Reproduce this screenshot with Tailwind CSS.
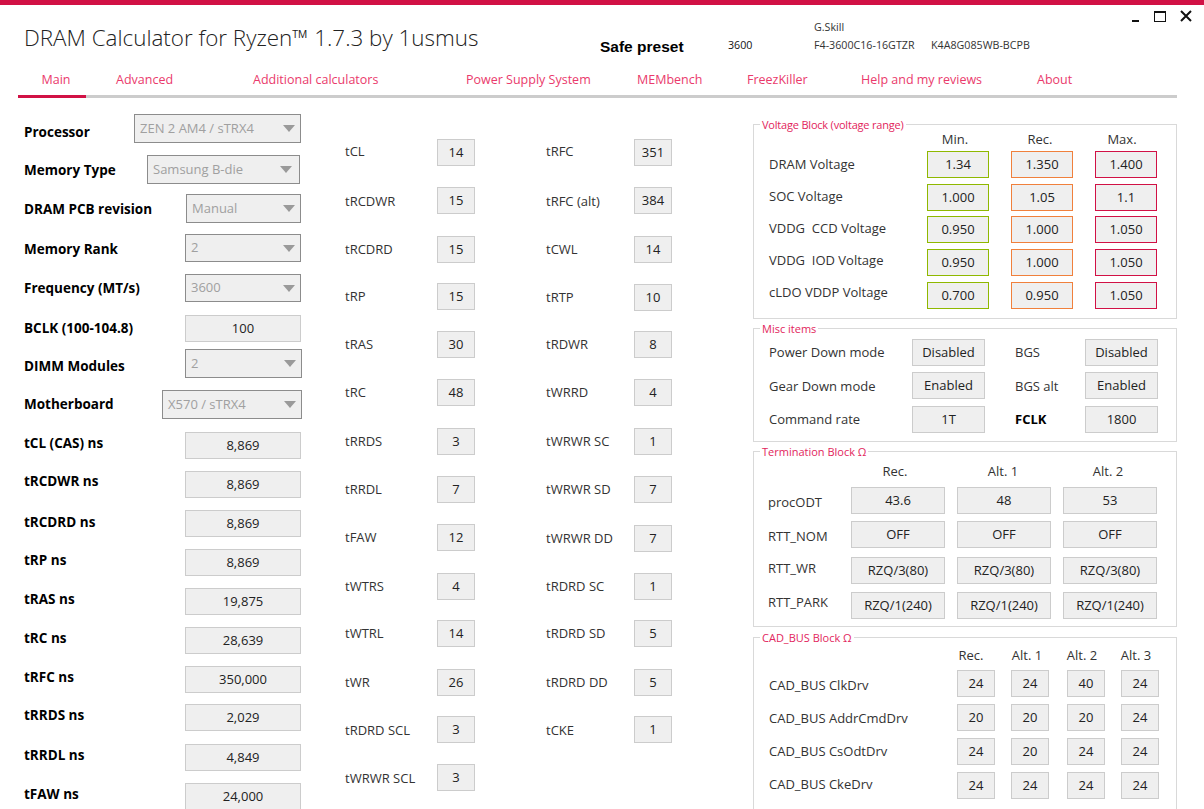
<!DOCTYPE html>
<html lang="en">

<head>
    <meta charset="UTF-8">
    <title>DRAM Calculator for Ryzen</title>
    <script src="https://cdn.jsdelivr.net/npm/@tailwindcss/browser@4"></script>
</head>

<body class="bg-white h-[809px] overflow-hidden font-['Open_Sans',sans-serif] text-[13px] text-[#333]">
    <div class="h-[5px] bg-[#d11145]"></div>

    <!-- header -->
    <header class="flex h-[56px] relative">
        <h1 class="ml-[24px] mt-[15px] text-[22.4px] leading-[36px] font-light text-[#222] w-[576px] whitespace-nowrap">DRAM Calculator for Ryzen™ 1.7.3 by 1usmus</h1>
        <div class="mt-[32px] w-[128px] font-['Liberation_Sans',sans-serif] font-bold text-[15.5px] leading-[20px] text-black">Safe preset</div>
        <div class="mt-[33px] w-[86px] text-[10.7px] leading-[14px] text-[#111]">3600</div>
        <div class="text-[10.7px] leading-[14px] text-[#333]">
            <div class="mt-[15px]">G.Skill</div>
            <div class="mt-[4px] flex"><span class="w-[117px]">F4-3600C16-16GTZR</span><span>K4A8G085WB-BCPB</span></div>
        </div>
        <svg class="absolute left-[1126px] top-[2px]" width="72" height="20" viewBox="0 0 72 20">
            <rect x="6" y="13" width="7" height="2" fill="#111" />
            <rect x="28.5" y="4.5" width="11" height="10" fill="none" stroke="#111" stroke-width="1" />
            <rect x="28" y="4" width="12" height="2" fill="#111" />
            <path d="M55 4 L65 14 M65 4 L55 14" stroke="#111" stroke-width="2" fill="none" />
        </svg>
    </header>

    <!-- tabs -->
    <nav class="ml-[18px] w-[1159px] h-[37px] border-b-[3px] border-[#cccccc] flex text-[#ea3a6c] text-[12.5px] leading-[38px]">
        <div class="w-[68px] h-[37px] border-b-[3px] border-[#d11145] text-center pl-[8px]">Main</div>
        <div class="w-[167px] pl-[30px]">Advanced</div>
        <div class="w-[213px]">Additional calculators</div>
        <div class="w-[171px]">Power Supply System</div>
        <div class="w-[110px]">MEMbench</div>
        <div class="w-[114px]">FreezKiller</div>
        <div class="w-[176px]">Help and my reviews</div>
        <div>About</div>
    </nav>

    <main class="flex items-start mt-[16px]">
        <!-- left column -->
        <section class="ml-[24px] w-[278px] font-bold text-[13.5px] text-black">
            <div class="h-[29px] flex items-center justify-between"><span class="pt-[7px]">Processor</span>
                <div class="mr-[1px] w-[167px] h-full bg-[#efefef] border border-[#8c8c8c] pl-[5px] pr-[5px] flex items-center justify-between font-normal text-[13px] text-[#a0a0a0]"><span>ZEN 2 AM4 / sTRX4</span><svg width="12" height="7"><path d="M0 0 H12 L6 7 Z" fill="#9a9a9a" /></svg></div></div>
            <div class="mt-[12px] h-[29px] flex items-center justify-between"><span class="pt-[1px]">Memory Type</span>
                <div class="mr-[2px] w-[153px] h-full bg-[#efefef] border border-[#8c8c8c] pl-[5px] pr-[7px] flex items-center justify-between font-normal text-[13px] text-[#a0a0a0]"><span>Samsung B-die</span><svg width="12" height="7"><path d="M0 0 H12 L6 7 Z" fill="#9a9a9a" /></svg></div></div>
            <div class="mt-[10px] h-[29px] flex items-center justify-between"><span class="pt-[1px]">DRAM PCB revision</span>
                <div class="mr-[1px] w-[115px] h-full bg-[#efefef] border border-[#8c8c8c] pl-[5px] pr-[5px] flex items-center justify-between font-normal text-[13px] text-[#a0a0a0]"><span>Manual</span><svg width="12" height="7"><path d="M0 0 H12 L6 7 Z" fill="#9a9a9a" /></svg></div></div>
            <div class="mt-[11px] h-[28px] flex items-center justify-between"><span class="pt-[2px]">Memory Rank</span>
                <div class="mr-[1px] w-[116px] h-full bg-[#efefef] border border-[#8c8c8c] pl-[5px] pr-[5px] flex items-center justify-between font-normal text-[13px] text-[#a0a0a0]"><span>2</span><svg width="12" height="7"><path d="M0 0 H12 L6 7 Z" fill="#9a9a9a" /></svg></div></div>
            <div class="mt-[12px] h-[28px] flex items-center justify-between"><span>Frequency (MT/s)</span>
                <div class="mr-[1px] w-[116px] h-full bg-[#efefef] border border-[#8c8c8c] pl-[5px] pr-[5px] flex items-center justify-between font-normal text-[13px] text-[#a0a0a0]"><span>3600</span><svg width="12" height="7"><path d="M0 0 H12 L6 7 Z" fill="#9a9a9a" /></svg></div></div>
            <div class="mt-[13px] h-[27px] flex items-center justify-between"><span>BCLK (100-104.8)</span>
                <div class="mr-[1px] w-[116px] h-full bg-[#efefef] border border-[#cccccc] flex items-center justify-center font-normal text-[13px] text-[#222]">100</div></div>
            <div class="mt-[7px] h-[29px] flex items-center justify-between"><span class="pt-[5px]">DIMM Modules</span>
                <div class="w-[117px] h-full bg-[#efefef] border border-[#8c8c8c] pl-[5px] pr-[5px] flex items-center justify-between font-normal text-[13px] text-[#a0a0a0]"><span>2</span><svg width="12" height="7"><path d="M0 0 H12 L6 7 Z" fill="#9a9a9a" /></svg></div></div>
            <div class="mt-[12px] h-[29px] flex items-center justify-between"><span>Motherboard</span>
                <div class="w-[140px] h-full bg-[#efefef] border border-[#8c8c8c] pl-[5px] pr-[5px] flex items-center justify-between font-normal text-[13px] text-[#a0a0a0]"><span>X570 / sTRX4</span><svg width="12" height="7"><path d="M0 0 H12 L6 7 Z" fill="#9a9a9a" /></svg></div></div>
            <div class="mt-[13px] h-[27px] flex items-center justify-between"><span class="pb-[4px]">tCL (CAS) ns</span>
                <div class="mr-[1px] w-[116px] h-full bg-[#efefef] border border-[#cccccc] flex items-center justify-center font-normal text-[13px] text-[#222]">8,869</div></div>
            <div class="mt-[12px] h-[27px] flex items-center justify-between"><span class="pb-[6px]">tRCDWR ns</span>
                <div class="mr-[1px] w-[116px] h-full bg-[#efefef] border border-[#cccccc] flex items-center justify-center font-normal text-[13px] text-[#222]">8,869</div></div>
            <div class="mt-[12px] h-[27px] flex items-center justify-between"><span class="pb-[2px]">tRCDRD ns</span>
                <div class="mr-[1px] w-[116px] h-full bg-[#efefef] border border-[#cccccc] flex items-center justify-center font-normal text-[13px] text-[#222]">8,869</div></div>
            <div class="mt-[12px] h-[27px] flex items-center justify-between"><span class="pb-[4px]">tRP ns</span>
                <div class="mr-[1px] w-[116px] h-full bg-[#efefef] border border-[#cccccc] flex items-center justify-center font-normal text-[13px] text-[#222]">8,869</div></div>
            <div class="mt-[12px] h-[27px] flex items-center justify-between"><span class="pb-[4px]">tRAS ns</span>
                <div class="mr-[1px] w-[116px] h-full bg-[#efefef] border border-[#cccccc] flex items-center justify-center font-normal text-[13px] text-[#222]">19,875</div></div>
            <div class="mt-[12px] h-[27px] flex items-center justify-between"><span class="pb-[4px]">tRC ns</span>
                <div class="mr-[1px] w-[116px] h-full bg-[#efefef] border border-[#cccccc] flex items-center justify-center font-normal text-[13px] text-[#222]">28,639</div></div>
            <div class="mt-[12px] h-[27px] flex items-center justify-between"><span class="pb-[4px]">tRFC ns</span>
                <div class="mr-[1px] w-[116px] h-full bg-[#efefef] border border-[#cccccc] flex items-center justify-center font-normal text-[13px] text-[#222]">350,000</div></div>
            <div class="mt-[11px] h-[27px] flex items-center justify-between"><span class="pb-[4px]">tRRDS ns</span>
                <div class="mr-[1px] w-[116px] h-full bg-[#efefef] border border-[#cccccc] flex items-center justify-center font-normal text-[13px] text-[#222]">2,029</div></div>
            <div class="mt-[13px] h-[27px] flex items-center justify-between"><span class="pb-[4px]">tRRDL ns</span>
                <div class="mr-[1px] w-[116px] h-full bg-[#efefef] border border-[#cccccc] flex items-center justify-center font-normal text-[13px] text-[#222]">4,849</div></div>
            <div class="mt-[12px] h-[27px] flex items-center justify-between"><span class="pb-[4px]">tFAW ns</span>
                <div class="mr-[1px] w-[116px] h-full bg-[#efefef] border border-[#cccccc] flex items-center justify-center font-normal text-[13px] text-[#222]">24,000</div></div>
        </section>

        <!-- timings 1 -->
        <section class="ml-[43px] w-[130px] mt-[25px]">
            <div class="h-[27px] flex items-center justify-between"><span class="pb-[2px]">tCL</span><div class="w-[38px] h-full bg-[#efefef] border border-[#cccccc] flex items-center justify-center text-[#222]">14</div></div>
            <div class="mt-[21px] h-[27px] flex items-center justify-between"><span class="pt-[3px]">tRCDWR</span><div class="w-[38px] h-full bg-[#efefef] border border-[#cccccc] flex items-center justify-center text-[#222]">15</div></div>
            <div class="mt-[22px] h-[27px] flex items-center justify-between"><span>tRCDRD</span><div class="w-[38px] h-full bg-[#efefef] border border-[#cccccc] flex items-center justify-center text-[#222]">15</div></div>
            <div class="mt-[20px] h-[27px] flex items-center justify-between"><span>tRP</span><div class="w-[38px] h-full bg-[#efefef] border border-[#cccccc] flex items-center justify-center text-[#222]">15</div></div>
            <div class="mt-[21px] h-[27px] flex items-center justify-between"><span>tRAS</span><div class="w-[38px] h-full bg-[#efefef] border border-[#cccccc] flex items-center justify-center text-[#222]">30</div></div>
            <div class="mt-[21px] h-[27px] flex items-center justify-between"><span>tRC</span><div class="w-[38px] h-full bg-[#efefef] border border-[#cccccc] flex items-center justify-center text-[#222]">48</div></div>
            <div class="mt-[22px] h-[27px] flex items-center justify-between"><span>tRRDS</span><div class="w-[38px] h-full bg-[#efefef] border border-[#cccccc] flex items-center justify-center text-[#222]">3</div></div>
            <div class="mt-[21px] h-[27px] flex items-center justify-between"><span>tRRDL</span><div class="w-[38px] h-full bg-[#efefef] border border-[#cccccc] flex items-center justify-center text-[#222]">7</div></div>
            <div class="mt-[21px] h-[27px] flex items-center justify-between"><span>tFAW</span><div class="w-[38px] h-full bg-[#efefef] border border-[#cccccc] flex items-center justify-center text-[#222]">12</div></div>
            <div class="mt-[22px] h-[27px] flex items-center justify-between"><span>tWTRS</span><div class="w-[38px] h-full bg-[#efefef] border border-[#cccccc] flex items-center justify-center text-[#222]">4</div></div>
            <div class="mt-[20px] h-[27px] flex items-center justify-between"><span>tWTRL</span><div class="w-[38px] h-full bg-[#efefef] border border-[#cccccc] flex items-center justify-center text-[#222]">14</div></div>
            <div class="mt-[22px] h-[27px] flex items-center justify-between"><span>tWR</span><div class="w-[38px] h-full bg-[#efefef] border border-[#cccccc] flex items-center justify-center text-[#222]">26</div></div>
            <div class="mt-[20px] h-[27px] flex items-center justify-between"><span class="pt-[2px]">tRDRD SCL</span><div class="w-[38px] h-full bg-[#efefef] border border-[#cccccc] flex items-center justify-center text-[#222]">3</div></div>
            <div class="mt-[21px] h-[27px] flex items-center justify-between"><span class="pt-[2px]">tWRWR SCL</span><div class="w-[38px] h-full bg-[#efefef] border border-[#cccccc] flex items-center justify-center text-[#222]">3</div></div>
        </section>

        <!-- timings 2 -->
        <section class="ml-[71px] w-[126px] mt-[25px]">
            <div class="h-[27px] flex items-center justify-between"><span class="pb-[2px]">tRFC</span><div class="w-[38px] h-full bg-[#efefef] border border-[#cccccc] flex items-center justify-center text-[#222]">351</div></div>
            <div class="mt-[21px] h-[27px] flex items-center justify-between"><span class="pt-[3px]">tRFC (alt)</span><div class="w-[38px] h-full bg-[#efefef] border border-[#cccccc] flex items-center justify-center text-[#222]">384</div></div>
            <div class="mt-[22px] h-[27px] flex items-center justify-between"><span>tCWL</span><div class="w-[38px] h-full bg-[#efefef] border border-[#cccccc] flex items-center justify-center text-[#222]">14</div></div>
            <div class="mt-[21px] h-[27px] flex items-center justify-between"><span>tRTP</span><div class="w-[38px] h-full bg-[#efefef] border border-[#cccccc] flex items-center justify-center text-[#222]">10</div></div>
            <div class="mt-[20px] h-[27px] flex items-center justify-between"><span>tRDWR</span><div class="w-[38px] h-full bg-[#efefef] border border-[#cccccc] flex items-center justify-center text-[#222]">8</div></div>
            <div class="mt-[21px] h-[27px] flex items-center justify-between"><span>tWRRD</span><div class="w-[38px] h-full bg-[#efefef] border border-[#cccccc] flex items-center justify-center text-[#222]">4</div></div>
            <div class="mt-[22px] h-[27px] flex items-center justify-between"><span>tWRWR SC</span><div class="w-[38px] h-full bg-[#efefef] border border-[#cccccc] flex items-center justify-center text-[#222]">1</div></div>
            <div class="mt-[21px] h-[27px] flex items-center justify-between"><span>tWRWR SD</span><div class="w-[38px] h-full bg-[#efefef] border border-[#cccccc] flex items-center justify-center text-[#222]">7</div></div>
            <div class="mt-[22px] h-[27px] flex items-center justify-between"><span>tWRWR DD</span><div class="w-[38px] h-full bg-[#efefef] border border-[#cccccc] flex items-center justify-center text-[#222]">7</div></div>
            <div class="mt-[21px] h-[27px] flex items-center justify-between"><span>tRDRD SC</span><div class="w-[38px] h-full bg-[#efefef] border border-[#cccccc] flex items-center justify-center text-[#222]">1</div></div>
            <div class="mt-[20px] h-[27px] flex items-center justify-between"><span>tRDRD SD</span><div class="w-[38px] h-full bg-[#efefef] border border-[#cccccc] flex items-center justify-center text-[#222]">5</div></div>
            <div class="mt-[22px] h-[27px] flex items-center justify-between"><span>tRDRD DD</span><div class="w-[38px] h-full bg-[#efefef] border border-[#cccccc] flex items-center justify-center text-[#222]">5</div></div>
            <div class="mt-[20px] h-[27px] flex items-center justify-between"><span class="pt-[2px]">tCKE</span><div class="w-[38px] h-full bg-[#efefef] border border-[#cccccc] flex items-center justify-center text-[#222]">1</div></div>
        </section>

        <!-- blocks -->
        <section class="ml-[81px] w-[424px] mt-[10px]">
            <div class="relative h-[195px] border border-[#d9d9d9] pt-[5px] pl-[15px] pr-[19px]">
                <span class="absolute left-[6px] -top-[8px] bg-white px-[2px] text-[11px] leading-[15px] tracking-[-0.2px] text-[#e2255c]">Voltage Block (voltage range)</span>
                <div class="flex h-[21px] items-center text-center"><span class="ml-[155px] w-[62px] pb-[2px]">Min.</span><span class="ml-[23px] w-[62px] pb-[2px]">Rec.</span><span class="ml-[20px] w-[62px] pb-[2px]">Max.</span></div>
                <div class="h-[27px] flex items-center justify-between"><span class="grow">DRAM Voltage</span><div class="flex gap-[22px]"><div class="w-[62px] h-[27px] bg-[#efefef] border border-[#8fb800] flex items-center justify-center text-[#222]">1.34</div><div class="w-[62px] h-[27px] bg-[#efefef] border border-[#f0803c] flex items-center justify-center text-[#222]">1.350</div><div class="w-[62px] h-[27px] bg-[#efefef] border border-[#d11145] flex items-center justify-center text-[#222]">1.400</div></div></div>
                <div class="mt-[6px] h-[27px] flex items-center justify-between"><span class="grow pb-[2px]">SOC Voltage</span><div class="flex gap-[22px]"><div class="w-[62px] h-[27px] bg-[#efefef] border border-[#8fb800] flex items-center justify-center text-[#222]">1.000</div><div class="w-[62px] h-[27px] bg-[#efefef] border border-[#f0803c] flex items-center justify-center text-[#222]">1.05</div><div class="w-[62px] h-[27px] bg-[#efefef] border border-[#d11145] flex items-center justify-center text-[#222]">1.1</div></div></div>
                <div class="mt-[5px] h-[27px] flex items-center justify-between"><span class="grow pb-[2px]">VDDG&nbsp; CCD Voltage</span><div class="flex gap-[22px]"><div class="w-[62px] h-[27px] bg-[#efefef] border border-[#8fb800] flex items-center justify-center text-[#222]">0.950</div><div class="w-[62px] h-[27px] bg-[#efefef] border border-[#f0803c] flex items-center justify-center text-[#222]">1.000</div><div class="w-[62px] h-[27px] bg-[#efefef] border border-[#d11145] flex items-center justify-center text-[#222]">1.050</div></div></div>
                <div class="mt-[6px] h-[27px] flex items-center justify-between"><span class="grow pb-[3px]">VDDG&nbsp; IOD Voltage</span><div class="flex gap-[22px]"><div class="w-[62px] h-[27px] bg-[#efefef] border border-[#8fb800] flex items-center justify-center text-[#222]">0.950</div><div class="w-[62px] h-[27px] bg-[#efefef] border border-[#f0803c] flex items-center justify-center text-[#222]">1.000</div><div class="w-[62px] h-[27px] bg-[#efefef] border border-[#d11145] flex items-center justify-center text-[#222]">1.050</div></div></div>
                <div class="mt-[6px] h-[27px] flex items-center justify-between"><span class="grow pb-[5px]">cLDO VDDP Voltage</span><div class="flex gap-[22px]"><div class="w-[62px] h-[27px] bg-[#efefef] border border-[#8fb800] flex items-center justify-center text-[#222]">0.700</div><div class="w-[62px] h-[27px] bg-[#efefef] border border-[#f0803c] flex items-center justify-center text-[#222]">0.950</div><div class="w-[62px] h-[27px] bg-[#efefef] border border-[#d11145] flex items-center justify-center text-[#222]">1.050</div></div></div>
            </div>

            <div class="relative mt-[9px] h-[114px] border border-[#d9d9d9] pt-[10px] pl-[15px]">
                <span class="absolute left-[6px] -top-[8px] bg-white px-[2px] text-[11px] leading-[15px] text-[#e2255c]">Misc items</span>
                <div class="h-[27px] flex items-center"><span class="w-[143px]">Power Down mode</span><div class="w-[73px] h-full bg-[#efefef] border border-[#cccccc] flex items-center justify-center text-[#222]">Disabled</div><span class="ml-[30px] w-[70px]">BGS</span><div class="w-[73px] h-full bg-[#efefef] border border-[#cccccc] flex items-center justify-center text-[#222]">Disabled</div></div>
                <div class="mt-[6px] h-[27px] flex items-center"><span class="w-[143px] pt-[2px]">Gear Down mode</span><div class="w-[73px] h-full bg-[#efefef] border border-[#cccccc] flex items-center justify-center text-[#222]">Enabled</div><span class="ml-[30px] w-[70px] pt-[2px]">BGS alt</span><div class="w-[73px] h-full bg-[#efefef] border border-[#cccccc] flex items-center justify-center text-[#222]">Enabled</div></div>
                <div class="mt-[7px] h-[27px] flex items-center"><span class="w-[143px]">Command rate</span><div class="w-[73px] h-full bg-[#efefef] border border-[#cccccc] flex items-center justify-center text-[#222]">1T</div><span class="ml-[30px] w-[70px] font-bold text-black">FCLK</span><div class="w-[73px] h-full bg-[#efefef] border border-[#cccccc] flex items-center justify-center text-[#222]">1800</div></div>
            </div>

            <div class="relative mt-[9px] h-[176px] border border-[#d9d9d9] pt-[10px] pl-[14px]">
                <span class="absolute left-[6px] -top-[8px] bg-white px-[2px] text-[11px] leading-[15px] text-[#e2255c]">Termination Block Ω</span>
                <div class="flex h-[19px] items-center text-center"><span class="ml-[80px] w-[94px]">Rec.</span><span class="ml-[14px] w-[94px]">Alt. 1</span><span class="ml-[11px] w-[94px]">Alt. 2</span></div>
                <div class="mt-[6px] h-[27px] flex items-center"><span class="w-[83px] pt-[5px]">procODT</span><div class="flex gap-[12px]"><div class="w-[94px] h-[27px] bg-[#efefef] border border-[#cccccc] flex items-center justify-center text-[#222]">43.6</div><div class="w-[94px] h-[27px] bg-[#efefef] border border-[#cccccc] flex items-center justify-center text-[#222]">48</div><div class="w-[94px] h-[27px] bg-[#efefef] border border-[#cccccc] flex items-center justify-center text-[#222]">53</div></div></div>
                <div class="mt-[7px] h-[27px] flex items-center"><span class="w-[83px] pt-[4px]">RTT_NOM</span><div class="flex gap-[12px]"><div class="w-[94px] h-[27px] bg-[#efefef] border border-[#cccccc] flex items-center justify-center text-[#222]">OFF</div><div class="w-[94px] h-[27px] bg-[#efefef] border border-[#cccccc] flex items-center justify-center text-[#222]">OFF</div><div class="w-[94px] h-[27px] bg-[#efefef] border border-[#cccccc] flex items-center justify-center text-[#222]">OFF</div></div></div>
                <div class="mt-[9px] h-[27px] flex items-center"><span class="w-[83px] pb-[3px]">RTT_WR</span><div class="flex gap-[12px]"><div class="w-[94px] h-[27px] bg-[#efefef] border border-[#cccccc] flex items-center justify-center text-[#222]">RZQ/3(80)</div><div class="w-[94px] h-[27px] bg-[#efefef] border border-[#cccccc] flex items-center justify-center text-[#222]">RZQ/3(80)</div><div class="w-[94px] h-[27px] bg-[#efefef] border border-[#cccccc] flex items-center justify-center text-[#222]">RZQ/3(80)</div></div></div>
                <div class="mt-[8px] h-[27px] flex items-center"><span class="w-[83px] pb-[5px]">RTT_PARK</span><div class="flex gap-[12px]"><div class="w-[94px] h-[27px] bg-[#efefef] border border-[#cccccc] flex items-center justify-center text-[#222]">RZQ/1(240)</div><div class="w-[94px] h-[27px] bg-[#efefef] border border-[#cccccc] flex items-center justify-center text-[#222]">RZQ/1(240)</div><div class="w-[94px] h-[27px] bg-[#efefef] border border-[#cccccc] flex items-center justify-center text-[#222]">RZQ/1(240)</div></div></div>
            </div>

            <div class="relative mt-[10px] h-[200px] border border-[#d9d9d9] pt-[8px] pl-[15px]">
                <span class="absolute left-[6px] -top-[8px] bg-white px-[2px] text-[11px] leading-[15px] text-[#e2255c]">CAD_BUS Block Ω</span>
                <div class="flex h-[19px] items-center text-center"><span class="ml-[183px] w-[38px]">Rec.</span><span class="ml-[18px] w-[38px]">Alt. 1</span><span class="ml-[17px] w-[38px]">Alt. 2</span><span class="ml-[16px] w-[38px]">Alt. 3</span></div>
                <div class="mt-[5px] h-[27px] flex items-center"><span class="w-[188px] pt-[5px]">CAD_BUS ClkDrv</span><div class="flex"><div class="w-[38px] h-[27px] bg-[#efefef] border border-[#cccccc] flex items-center justify-center text-[#222]">24</div><div class="ml-[16px] w-[38px] h-[27px] bg-[#efefef] border border-[#cccccc] flex items-center justify-center text-[#222]">24</div><div class="ml-[18px] w-[38px] h-[27px] bg-[#efefef] border border-[#cccccc] flex items-center justify-center text-[#222]">40</div><div class="ml-[16px] w-[38px] h-[27px] bg-[#efefef] border border-[#cccccc] flex items-center justify-center text-[#222]">24</div></div></div>
                <div class="mt-[7px] h-[27px] flex items-center"><span class="w-[188px] pt-[3px]">CAD_BUS AddrCmdDrv</span><div class="flex"><div class="w-[38px] h-[27px] bg-[#efefef] border border-[#cccccc] flex items-center justify-center text-[#222]">20</div><div class="ml-[16px] w-[38px] h-[27px] bg-[#efefef] border border-[#cccccc] flex items-center justify-center text-[#222]">20</div><div class="ml-[18px] w-[38px] h-[27px] bg-[#efefef] border border-[#cccccc] flex items-center justify-center text-[#222]">20</div><div class="ml-[16px] w-[38px] h-[27px] bg-[#efefef] border border-[#cccccc] flex items-center justify-center text-[#222]">24</div></div></div>
                <div class="mt-[7px] h-[27px] flex items-center"><span class="w-[188px]">CAD_BUS CsOdtDrv</span><div class="flex"><div class="w-[38px] h-[27px] bg-[#efefef] border border-[#cccccc] flex items-center justify-center text-[#222]">24</div><div class="ml-[16px] w-[38px] h-[27px] bg-[#efefef] border border-[#cccccc] flex items-center justify-center text-[#222]">20</div><div class="ml-[18px] w-[38px] h-[27px] bg-[#efefef] border border-[#cccccc] flex items-center justify-center text-[#222]">24</div><div class="ml-[16px] w-[38px] h-[27px] bg-[#efefef] border border-[#cccccc] flex items-center justify-center text-[#222]">24</div></div></div>
                <div class="mt-[7px] h-[27px] flex items-center"><span class="w-[188px] pb-[2px]">CAD_BUS CkeDrv</span><div class="flex"><div class="w-[38px] h-[27px] bg-[#efefef] border border-[#cccccc] flex items-center justify-center text-[#222]">24</div><div class="ml-[16px] w-[38px] h-[27px] bg-[#efefef] border border-[#cccccc] flex items-center justify-center text-[#222]">24</div><div class="ml-[18px] w-[38px] h-[27px] bg-[#efefef] border border-[#cccccc] flex items-center justify-center text-[#222]">24</div><div class="ml-[16px] w-[38px] h-[27px] bg-[#efefef] border border-[#cccccc] flex items-center justify-center text-[#222]">24</div></div></div>
            </div>
        </section>
    </main>
</body>

</html>
